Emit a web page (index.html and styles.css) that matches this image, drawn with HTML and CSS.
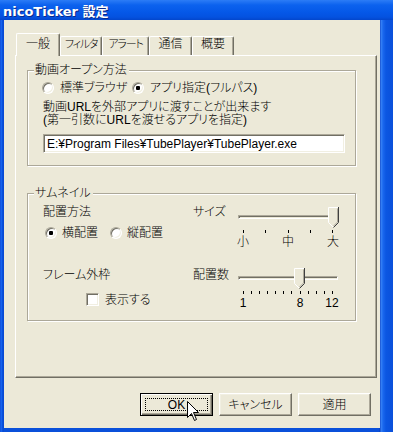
FILE: index.html
```html
<!DOCTYPE html>
<html lang="ja">
<head>
<meta charset="utf-8">
<title>nicoTicker 設定</title>
<link rel="stylesheet" href="styles.css">
</head>
<body>
<div class="window">
  <div class="titlebar"><span class="title">nicoTicker 設定</span></div>
  <div class="client">
    <div class="tabs">
      <div class="tab active w44">一般</div>
      <div class="tab kana w42">フィルタ</div>
      <div class="tab kana w47">アラート</div>
      <div class="tab w43">通信</div>
      <div class="tab w42">概要</div>
    </div>
    <div class="panel">
      <div class="group g1">
        <div class="legend">動画オープン方法</div>
        <div class="radio-row">
          <div class="opt w90"><span class="radio"></span><span>標準ブラウザ</span></div>
          <div class="opt"><span class="radio checked"></span><span>アプリ指定(フルパス)</span></div>
        </div>
        <p class="note">動画URLを外部アプリに渡すことが出来ます<br>(第一引数にURLを渡せるアプリを指定)</p>
        <div class="input">E:¥Program Files¥TubePlayer¥TubePlayer.exe</div>
      </div>
      <div class="group g2">
        <div class="legend">サムネイル</div>
        <div class="grid">
          <div class="cell">
            <div class="label">配置方法</div>
            <div class="radio-row r2">
              <div class="opt w65"><span class="radio checked"></span><span>横配置</span></div>
              <div class="opt"><span class="radio"></span><span>縦配置</span></div>
            </div>
          </div>
          <div class="cell pair">
            <div class="label side">サイズ</div>
            <div class="slider s1">
              <div class="track"></div>
              <svg class="thumb" style="left:90px" width="11" height="21" viewBox="0 0 11 21">
                <path d="M0.5 0.5H10.5V15.5L5.5 20.5L0.5 15.5Z" fill="#ECE9D8"/>
                <path d="M0.5 15.5V0.5H10" fill="none" stroke="#fff"/>
                <path d="M0.5 15.5L5 20" fill="none" stroke="#fff"/>
                <path d="M10.5 0V15.5L5.5 20.5" fill="none" stroke="#404040"/>
                <path d="M9.5 1.5V15L5.5 19" fill="none" stroke="#ACA899"/>
              </svg>
              <div class="ticks"><i></i><i></i><i></i><i></i><i></i></div>
              <div class="scale"><span>小</span><span>中</span><span>大</span></div>
            </div>
          </div>
          <div class="cell">
            <div class="label lb">フレーム外枠</div>
            <div class="check-row"><span class="checkbox"></span><span>表示する</span></div>
          </div>
          <div class="cell pair">
            <div class="label side lb">配置数</div>
            <div class="slider s2">
              <div class="track"></div>
              <svg class="thumb" style="left:56px" width="11" height="21" viewBox="0 0 11 21">
                <path d="M0.5 0.5H10.5V15.5L5.5 20.5L0.5 15.5Z" fill="#ECE9D8"/>
                <path d="M0.5 15.5V0.5H10" fill="none" stroke="#fff"/>
                <path d="M0.5 15.5L5 20" fill="none" stroke="#fff"/>
                <path d="M10.5 0V15.5L5.5 20.5" fill="none" stroke="#404040"/>
                <path d="M9.5 1.5V15L5.5 19" fill="none" stroke="#ACA899"/>
              </svg>
              <div class="ticks"><i></i><i></i><i></i><i></i><i></i><i></i><i></i><i></i><i></i><i></i><i></i><i></i></div>
              <div class="nums">
                <span style="left:5px">1</span>
                <span style="left:62px">8</span>
                <span style="left:94px">12</span>
              </div>
            </div>
          </div>
        </div>
      </div>
    </div>
    <div class="buttons">
      <div class="btn default"><span>OK</span>
        <svg class="cursor" width="13" height="21" viewBox="0 0 13 21">
          <path d="M0.5 0.5V16.5L4.5 12.5L7.5 19.5L9.5 18.5L6.5 11.5H11.5Z" fill="#fff" stroke="#000"/>
        </svg>
      </div>
      <div class="btn">キャンセル</div>
      <div class="btn">適用</div>
    </div>
  </div>
</div>
</body>
</html>
```

FILE: styles.css
```css
* { box-sizing: border-box; }
html, body { margin: 0; padding: 0; }
body {
  width: 393px;
  height: 432px;
  overflow: hidden;
  font-family: "Liberation Sans", "Noto Sans CJK JP", sans-serif;
  font-size: 12px;
  line-height: 12px;
  color: #000;
  font-weight: 300;
  font-feature-settings: "palt";
}
.window {
  width: 393px;
  height: 432px;
  display: flex;
  flex-direction: column;
  background:
    linear-gradient(to right, #0A3FD0 0, #1E6CF0 1px, #0C5AE8 2px, #0846D0 3px, transparent 4px),
    linear-gradient(to right, transparent 379px, #083CBF 380px, #3A84F6 381px, #1A68EE 383px, #0B56E2 386px, #0A50DA 393px);
  background-color: #0A50DA;
}
.titlebar {
  height: 20px;
  flex: none;
  background: linear-gradient(#2C7CF6 0, #0C62EE 25%, #0558E8 60%, #0452E0 85%, #0346CC 100%);
  padding: 3px 0 0 3px;
  color: #fff;
  font-family: "DejaVu Sans", "Noto Sans CJK JP", sans-serif;
  font-weight: bold;
  font-size: 13px;
  line-height: 17px;
  text-shadow: 1px 1px #0A2A8C;
  font-feature-settings: normal;
}
.client {
  flex: none;
  width: 376px;
  height: 408px;
  margin-left: 4px;
  background: #ECE9D8;
  padding: 13px 0 0 11px;
}
.tabs {
  display: flex;
  align-items: flex-end;
  height: 22px;
  margin-left: 1px;
}
.tab {
  height: 19px;
  padding-top: 1px;
  text-align: center;
  border-top: 1px solid #fff;
  border-left: 1px solid #fff;
  border-right: 1px solid #716F64;
  border-radius: 2px 2px 0 0;
  box-shadow: inset -1px 0 #ACA899;
  background: #ECE9D8;
  white-space: nowrap;
  overflow: hidden;
}
.tab.kana {
  font-size: 11px;
  letter-spacing: -1.2px;
}
.tab.active {
  height: 23px;
  padding-top: 4px;
  margin-bottom: -1px;
  position: relative;
  z-index: 2;
}
.w44 { width: 44px; }
.w42 { width: 42px; }
.w47 { width: 47px; }
.w43 { width: 43px; }
.panel {
  width: 362px;
  height: 323px;
  border-top: 1px solid #fff;
  border-left: 1px solid #fff;
  border-right: 1px solid #716F64;
  border-bottom: 1px solid #716F64;
  box-shadow: inset -1px -1px #ACA899;
  padding: 14px 0 0 11px;
}
.group {
  position: relative;
  width: 329px;
  border: 1px solid #ACA899;
  box-shadow: inset 1px 1px #fff, 1px 1px #fff;
}
.g1 {
  height: 96px;
  padding: 11px 0 0 14px;
}
.g2 {
  height: 128px;
  margin-top: 27px;
  padding: 12px 0 0 15px;
}
.legend {
  position: absolute;
  top: -7px;
  left: 6px;
  padding: 0 2px 0 1px;
  background: #ECE9D8;
  line-height: 12px;
  white-space: nowrap;
}
.radio-row {
  display: flex;
  height: 12px;
}
.opt {
  display: flex;
  align-items: center;
  gap: 6px;
  white-space: nowrap;
}
.w90 { width: 90px; }
.w65 { width: 65px; }
.radio {
  position: relative;
  width: 12px;
  height: 12px;
  flex: none;
  border-radius: 50%;
  background: #fff;
  border: 1px solid;
  border-color: #ACA899 #fff #fff #ACA899;
  box-shadow: inset 1px 1px #716F64, inset -1px -1px #F1EFE2;
}
.radio.checked::after {
  content: "";
  position: absolute;
  left: 3px;
  top: 3px;
  width: 4px;
  height: 4px;
  border-radius: 1px;
  background: #000;
}
.note {
  margin: 7px 0 0 1px;
  line-height: 13px;
  white-space: nowrap;
}
.input {
  width: 302px;
  height: 19px;
  margin: 7px 0 0 1px;
  padding: 3px 0 0 3px;
  background: #fff;
  border: 1px solid;
  border-color: #ACA899 #fff #fff #ACA899;
  box-shadow: inset 1px 1px #716F64, inset -1px -1px #F1EFE2;
  line-height: 12px;
  white-space: nowrap;
  overflow: hidden;
}
.grid {
  display: grid;
  grid-template-columns: 150px 1fr;
  row-gap: 19px;
}
.label { line-height: 12px; white-space: nowrap; }
.label.lb { margin-top: 1px; }
.r2 { margin-top: 9px; margin-left: 2px; }
.r2 .opt { gap: 5px; }
.pair {
  display: flex;
  align-items: flex-start;
}
.side { width: 45px; flex: none; }
.s1 { margin-top: 1px; }
.slider {
  position: relative;
  width: 100px;
  height: 42px;
}
.track {
  margin-top: 8px;
  height: 4px;
  border: 1px solid;
  border-color: #ACA899 #fff #fff #ACA899;
  box-shadow: inset 1px 1px #716F64;
  background: #ECE9D8;
}
.thumb {
  position: absolute;
  top: 0;
}
.ticks {
  display: flex;
  justify-content: space-between;
  margin: 11px 5px 0 5px;
  height: 3px;
}
.ticks i {
  display: block;
  width: 1px;
  height: 3px;
  background: #000;
}
.scale {
  display: flex;
  justify-content: space-between;
  margin: 3px -1px 0 -1px;
  line-height: 12px;
}
.nums {
  position: relative;
  margin-top: 3px;
  height: 12px;
  line-height: 12px;
}
.nums span {
  position: absolute;
  top: 0;
  transform: translateX(-50%);
}
.check-row {
  display: flex;
  align-items: center;
  gap: 6px;
  margin: 12px 0 0 43px;
  height: 13px;
}
.checkbox {
  width: 13px;
  height: 13px;
  flex: none;
  background: #fff;
  border: 1px solid;
  border-color: #ACA899 #fff #fff #ACA899;
  box-shadow: inset 1px 1px #716F64, inset -1px -1px #F1EFE2;
}
.buttons {
  display: flex;
  justify-content: flex-end;
  gap: 6px;
  width: 362px;
  margin-top: 15px;
  padding-right: 6px;
}
.btn {
  position: relative;
  width: 73px;
  height: 23px;
  display: flex;
  align-items: center;
  justify-content: center;
  background: #ECE9D8;
  border: 1px solid;
  border-color: #fff #716F64 #716F64 #fff;
  box-shadow: inset -1px -1px #ACA899, inset 1px 1px #F1EFE2;
  white-space: nowrap;
}
.btn.default {
  border: 1px solid #000;
  box-shadow: inset 1px 1px #fff, inset -1px -1px #716F64, inset -2px -2px #ACA899;
}
.btn.default::after {
  content: "";
  position: absolute;
  left: 4px;
  top: 4px;
  right: 4px;
  bottom: 4px;
  border: 1px dotted #000;
}
.cursor {
  position: absolute;
  left: 46px;
  top: 7px;
  z-index: 3;
}
```
